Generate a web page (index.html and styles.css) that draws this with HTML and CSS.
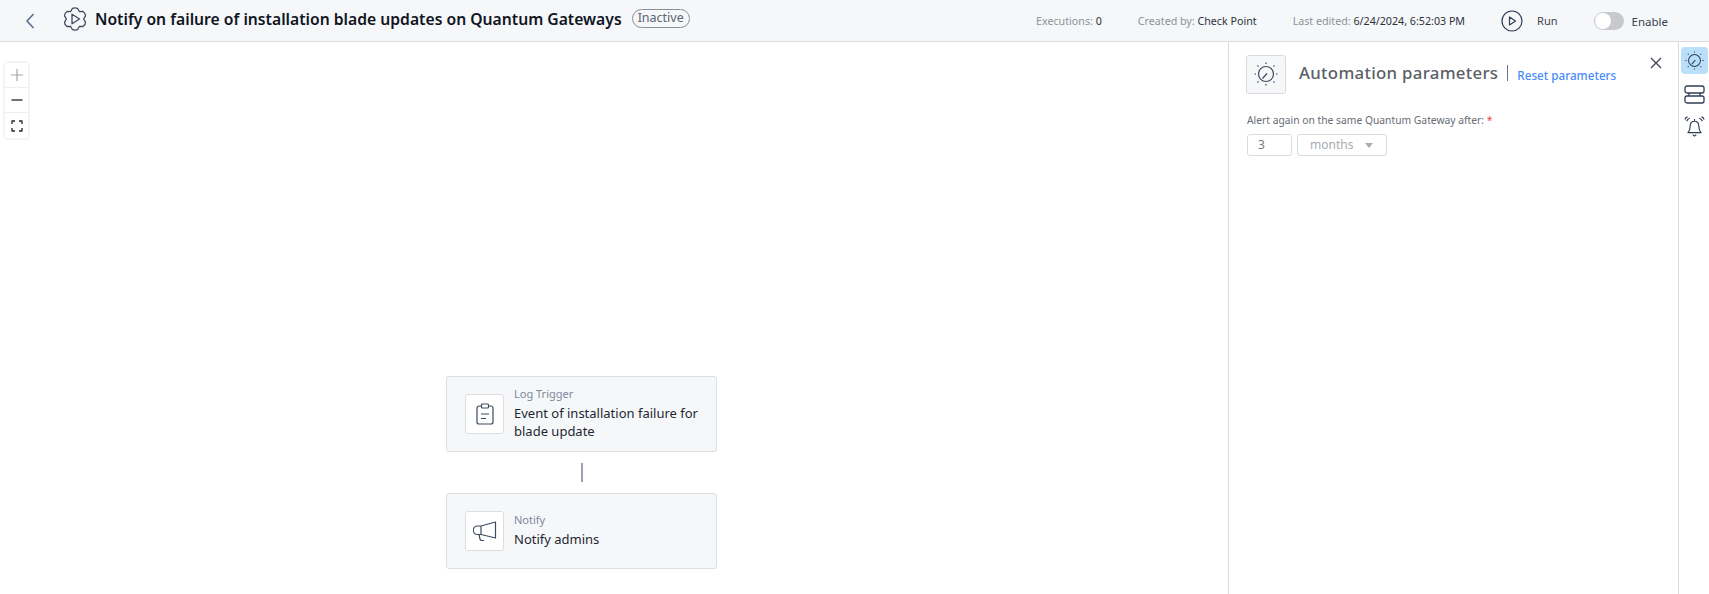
FILE: index.html
```html
<!DOCTYPE html>
<html lang="en">
<head>
<meta charset="utf-8">
<title>Automation</title>
<link rel="stylesheet" href="styles.css">
</head>
<body>
<div class="app">
  <header class="topbar">
    <svg class="back" width="12" height="18" viewBox="0 0 12 18"><path d="M9.500 2 3 9l6.500 7"/></svg>
    <svg class="gear" width="24" height="24" viewBox="0 0 24 24"><path d="M9.500 1.300Q12 .6 14.500 1.300L16.300 4.550 20.040 4.500Q22.400 6 22.500 8.800L20.600 12 22.500 15.200Q22.400 18 20.040 19.500L16.300 19.450 14.500 22.700Q12 23.400 9.500 22.700L7.700 19.450 3.960 19.500Q1.600 18 1.500 15.200L3.400 12 1.500 8.800Q1.600 6 3.960 4.500L7.700 4.550Z"/><path d="M9 7.200v9.600l7.500-4.800z"/></svg>
    <h1 class="title">Notify on failure of installation blade updates on Quantum Gateways</h1>
    <span class="status">Inactive</span>
    <div class="meta">
      <span class="meta-item">Executions: <b>0</b></span>
      <span class="meta-item created">Created by: <b>Check Point</b></span>
      <span class="meta-item edited">Last edited: <b>6/24/2024, 6:52:03 PM</b></span>
    </div>
    <svg class="run-icon" width="22" height="22" viewBox="0 0 22 22"><circle cx="11" cy="11" r="10"/><path d="M8.500 7v8l6-4z"/></svg>
    <span class="run-label">Run</span>
    <span class="toggle"><span class="knob"></span></span>
    <span class="enable-label">Enable</span>
  </header>
  <div class="workspace">
    <main class="canvas">
      <div class="zoom">
        <button class="zoom-btn"><svg width="14" height="14" viewBox="0 0 14 14"><path class="plus" d="M7 1v12M1 7h12"/></svg></button>
        <button class="zoom-btn"><svg width="14" height="14" viewBox="0 0 14 14"><path class="minus" d="M1.500 7h11"/></svg></button>
        <button class="zoom-btn"><svg width="14" height="14" viewBox="0 0 14 14"><path class="minus" d="M2 5V2h3M9 2h3v3M12 9v3H9M5 12H2V9"/></svg></button>
      </div>
      <div class="flow">
        <article class="node">
          <div class="node-icon">
            <svg width="18" height="22" viewBox="0 0 18 22"><path d="M5.500 3H3a2 2 0 0 0-2 2v14a2 2 0 0 0 2 2h12a2 2 0 0 0 2-2V5a2 2 0 0 0-2-2h-2.500"/><rect x="5.500" y="1" width="7" height="4" rx="1"/><path d="M5 11h8M5 15.500h5"/></svg>
          </div>
          <div class="node-text">
            <div class="node-type">Log Trigger</div>
            <div class="node-name">Event of installation failure for blade update</div>
          </div>
        </article>
        <div class="connector"></div>
        <article class="node">
          <div class="node-icon">
            <svg width="24" height="22" viewBox="0 0 24 22"><path d="M22.500 2v16L8 14.500H4.500a3.200 3.200 0 0 1 0-8.500H8zM8 6v8.500M6 14.500l1 4.500a2 2 0 0 0 2 1.500h2"/></svg>
          </div>
          <div class="node-text">
            <div class="node-type">Notify</div>
            <div class="node-name">Notify admins</div>
          </div>
        </article>
      </div>
    </main>
    <aside class="panel">
      <div class="panel-head">
        <div class="panel-icon">
          <svg width="24" height="24" viewBox="0 0 24 24"><use href="#dial"/></svg>
        </div>
        <h2 class="panel-title">Automation parameters</h2>
        <span class="divider"></span>
        <a class="reset">Reset parameters</a>
        <svg class="close" width="12" height="12" viewBox="0 0 12 12"><path d="M1 1l10 10M11 1 1 11"/></svg>
      </div>
      <label class="field-label">Alert again on the same Quantum Gateway after: <span class="req">*</span></label>
      <div class="field-row">
        <div class="input">3</div>
        <div class="select">months<span class="caret"></span></div>
      </div>
    </aside>
    <nav class="rail">
      <div class="rail-btn active"><svg width="19" height="19" viewBox="0 0 24 24"><use href="#dial"/></svg></div>
      <div class="rail-btn"><svg width="21" height="19" viewBox="0 0 21 19"><rect x="1" y="1" width="19" height="7" rx="2"/><rect x="1" y="11" width="19" height="7" rx="2"/><path d="M5 8v3M16 8v3"/></svg></div>
      <div class="rail-btn"><svg width="21" height="21" viewBox="0 0 24 24"><path d="M4.500 19c1.500-1.500 2.500-3.500 2.500-7 0-3.500 2-6 5-6s5 2.500 5 6c0 3.500 1 5.500 2.500 7zM12 3.500V6M10 21.500l2 1.500 2-1.500M6.500 2.500C5 3 3.500 4.500 3 6M4 1C2.500 1.500 1.500 2.500 1 4M17.500 2.500C19 3 20.500 4.500 21 6M20 1c1.500.5 2.500 1.500 3 3"/></svg></div>
    </nav>
  </div>
</div>
<svg class="defs" width="0" height="0"><defs><g id="dial"><circle cx="12" cy="12" r="7.500"/><path d="M8.500 16.500 13 11.500"/><path d="M12 .5v1.500M12 22v1.500M.5 12H2M22 12h1.500M3.500 3.500l1 1M19.500 19.500l1 1M20.500 3.500l-1 1M4.500 19.500l-1 1"/></g></defs></svg>
</body>
</html>
```

FILE: styles.css
```css
* { box-sizing: border-box; }
html, body { margin: 0; height: 100%; }
body {
  font-family: "Noto Sans", "Open Sans", sans-serif;
  color: #1c2433;
  background: #fff;
  overflow: hidden;
}
svg { fill: none; stroke: #3d4a5f; stroke-width: 1.500; stroke-linejoin: round; display: block; }
.defs { position: absolute; }
.app { display: flex; flex-direction: column; height: 594px; }

.topbar {
  height: 42px;
  flex: none;
  display: flex;
  align-items: center;
  background: #f6f7f9;
  border-bottom: 1px solid #d9dbe0;
  padding-left: 24px;
}
.back { stroke: #5d7195; stroke-width: 1.700; margin-right: 27px; }
.gear { margin-right: 8px; stroke-width: 1.300; transform: translateY(-2px); }
.title { margin: 0; font-size: 15.700px; font-weight: 600; color: #10151f; white-space: nowrap; transform: translateY(-2px); }
.status {
  margin-left: 10px;
  border: 1px solid #8a8f98;
  border-radius: 10px;
  height: 19px;
  line-height: 16px;
  padding: 0 5px;
  font-size: 12.500px;
  color: #5c6470;
  transform: translateY(-2px);
}
.meta { margin-left: auto; display: flex; font-size: 10.700px; color: #8d929b; }
.meta b { font-weight: 400; color: #2b3240; }
.created { margin-left: 36px; }
.edited { margin-left: 36px; }
.run-icon { margin-left: 36px; stroke: #2f3d55; stroke-width: 1.200; }
.run-label { margin-left: 14px; font-size: 11px; color: #3a4250; }
.toggle {
  margin-left: 36px;
  width: 30px;
  height: 18px;
  border-radius: 9px;
  background: #c7c9cd;
  position: relative;
}
.knob {
  position: absolute;
  left: 1px;
  top: 1px;
  width: 16px;
  height: 16px;
  border-radius: 50%;
  background: #fff;
}
.enable-label { margin-left: 8px; margin-right: 41px; font-size: 11.500px; color: #3a4250; transform: translateY(1px); }

.workspace { flex: 1; display: flex; min-height: 0; }
.canvas { flex: 1; position: relative; }

.zoom {
  position: absolute;
  left: 5px;
  top: 21px;
  display: flex;
  flex-direction: column;
  width: 23px;
  background: #fff;
  box-shadow: 0 0 3px rgba(0, 0, 0, .16);
}
.zoom-btn {
  height: 25px;
  padding: 0;
  border: 0;
  border-bottom: 1px solid #eceef0;
  background: #fff;
  display: flex;
  align-items: center;
  justify-content: center;
}
.zoom-btn:last-child { border-bottom: 0; }
.plus { stroke: #a3a6ab; stroke-width: 1.200; }
.minus { stroke: #20252d; stroke-width: 1.300; }

.flow {
  position: absolute;
  left: 446px;
  top: 334px;
  width: 271px;
  display: flex;
  flex-direction: column;
  align-items: center;
}
.node {
  width: 100%;
  height: 76px;
  background: #f6f7f9;
  border: 1px solid #dcdee2;
  border-radius: 3px;
  display: flex;
  align-items: center;
  padding-left: 18px;
}
.node-icon {
  width: 39px;
  height: 40px;
  flex: none;
  background: #fff;
  border: 1px solid #dcdee2;
  border-radius: 3px;
  display: flex;
  align-items: center;
  justify-content: center;
}
.node-icon svg { stroke-width: 1.200; }
.node-text { margin-left: 10px; width: 195px; transform: translateY(-1px); }
.node-type { font-size: 11px; line-height: 16px; color: #7d879c; }
.node-name { font-size: 13px; line-height: 17.500px; color: #1f2733; margin-top: 3px; }
.connector { width: 2px; height: 19px; background: #99a3b5; margin: 11px 0; }

.panel {
  width: 451px;
  flex: none;
  border-left: 1px solid #d9dbe0;
  border-right: 1px solid #d9dbe0;
  padding: 12px 16px 0 17px;
}
.panel-head { display: flex; align-items: center; height: 40px; position: relative; }
.panel-icon {
  width: 40px;
  height: 39px;
  background: #f6f7f9;
  border: 1px solid #d9dbe0;
  border-radius: 3px;
  display: flex;
  align-items: center;
  justify-content: center;
  flex: none;
}
.panel-icon svg { stroke-width: 1.200; }
.panel-title {
  margin: 0 0 0 13px;
  font-size: 16.800px;
  font-weight: 500;
  letter-spacing: .3px;
  color: #5b5f66;
  white-space: nowrap;
  transform: translateY(-2px);
}
.divider { width: 1px; height: 16px; background: #70757d; margin: 0 9px; transform: translateY(-1px); }
.reset { font-size: 11.700px; font-weight: 500; color: #4a8cf7; white-space: nowrap; transform: translateY(1px); }
.close { position: absolute; right: 0; top: 3px; stroke: #3d4450; stroke-width: 1.300; }

.field-label { display: block; margin-top: 19px; margin-left: 1px; font-size: 10.300px; line-height: 15px; color: #686d75; }
.req { color: #e5484d; }
.field-row { display: flex; gap: 5px; margin-top: 6px; margin-left: 1px; }
.input {
  width: 45px;
  height: 22px;
  border: 1px solid #d9dbe0;
  border-radius: 3px;
  padding-left: 10px;
  font-size: 12px;
  line-height: 20px;
  color: #75797f;
}
.select {
  width: 90px;
  height: 22px;
  border: 1px solid #d9dbe0;
  border-radius: 3px;
  padding-left: 12px;
  font-size: 12px;
  line-height: 19px;
  color: #a9acb1;
  position: relative;
}
.caret {
  position: absolute;
  right: 13px;
  top: 8px;
  border-left: 4.500px solid transparent;
  border-right: 4.500px solid transparent;
  border-top: 5px solid #a9acb1;
}

.rail { width: 30px; flex: none; display: flex; flex-direction: column; align-items: center; padding-top: 5px; gap: 5px; }
.rail-btn {
  width: 27px;
  height: 27px;
  border-radius: 4px;
  display: flex;
  align-items: center;
  justify-content: center;
}
.rail-btn.active { background: #b9dffb; margin-bottom: 2px; }
.rail svg { stroke: #2f3d55; stroke-width: 1.300; }
```
